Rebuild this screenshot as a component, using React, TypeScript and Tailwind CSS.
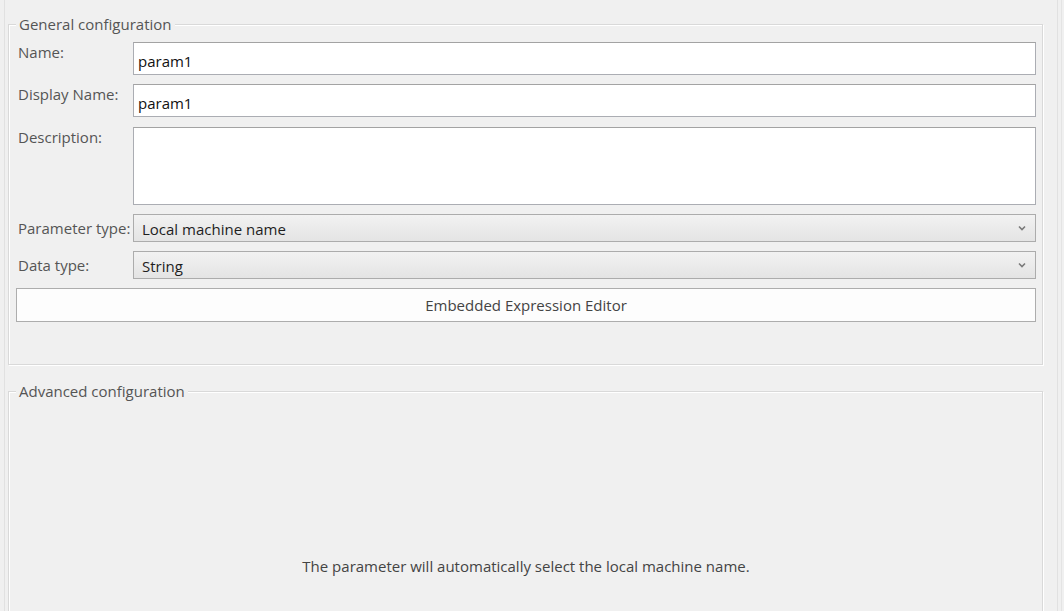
import React from 'react';

const font = { fontFamily: '"Segoe UI", "Open Sans", "Noto Sans", sans-serif' };

const Chevron: React.FC = () => (
  <svg width="8" height="6" viewBox="0 0 8 6" className="shrink-0">
    <path d="M1 1.5 L4 4.5 L7 1.5" fill="none" stroke="#7a7a7a" strokeWidth="1.6" />
  </svg>
);

const Label: React.FC<{ children: React.ReactNode }> = ({ children }) => (
  <div className="text-[#555] leading-[20px] pl-[2px]">{children}</div>
);

const TextBox: React.FC<{ value?: string; tall?: boolean }> = ({ value, tall }) => (
  <div
    className={`bg-white border border-[#abadb3] border-t-[#a3a3a3] px-[4px] text-[#111] leading-[20px] ${
      tall ? 'h-[78px] pt-[4px]' : 'h-[33px] pt-[8px]'
    }`}
  >
    {value}
  </div>
);

const Combo: React.FC<{ value: string }> = ({ value }) => (
  <div className="h-[28px] flex items-center justify-between border border-[#acacac] bg-gradient-to-b from-[#f2f2f2] to-[#e4e4e4] pl-[8px] pr-[9px] text-[#1e1e1e] leading-[20px]">
    <span className="pt-[1px]">{value}</span>
    <Chevron />
  </div>
);

const Group: React.FC<{ title: string; className?: string; children: React.ReactNode }> = ({
  title,
  className,
  children,
}) => (
  <fieldset
    className={`border border-[#d9d9d9] shadow-[inset_1px_1px_0_#ffffff,1px_1px_0_#ffffff] pl-[7px] pr-[6px] ${className ?? ''}`}
  >
    <legend className="px-[3px] bg-[#f0f0f0] text-[#555] leading-[20px]">{title}</legend>
    {children}
  </fieldset>
);

const App: React.FC = () => {
  return (
    <div className="w-[1064px] h-[611px] overflow-hidden bg-[#f0f0f0] flex text-[15px]" style={font}>
      <div className="w-[4px] shrink-0" />
      <div className="w-[1054px] shrink-0 border-l border-r border-[#e1e1e1] pl-[3px] pr-[14px] pt-[14px]">
        {/* General configuration */}
        <Group title="General configuration" className="pt-[8px] pb-[42px]">
          <div className="flex flex-col gap-[9px]">
            <div className="grid grid-cols-[117px_1fr]">
              <Label>Name:</Label>
              <TextBox value="param1" />
            </div>
            <div className="grid grid-cols-[117px_1fr]">
              <Label>Display Name:</Label>
              <TextBox value="param1" />
            </div>
            <div className="grid grid-cols-[117px_1fr] mt-[1px]">
              <Label>Description:</Label>
              <TextBox tall />
            </div>
            <div className="grid grid-cols-[117px_1fr] items-center">
              <Label>Parameter type:</Label>
              <Combo value="Local machine name" />
            </div>
            <div className="grid grid-cols-[117px_1fr] items-center">
              <Label>Data type:</Label>
              <Combo value="String" />
            </div>
            <button className="h-[34px] w-full bg-[#fdfdfd] border border-[#adadad] text-[#444] leading-[20px] text-center">
              Embedded Expression Editor
            </button>
          </div>
        </Group>

        {/* Advanced configuration */}
        <Group title="Advanced configuration" className="mt-[16px] pt-[155px] pb-[80px]">
          <p className="text-center text-[#444] leading-[20px]">
            The parameter will automatically select the local machine name.
          </p>
        </Group>
      </div>
      <div className="w-[3px] shrink-0" />
      <div className="w-px shrink-0 bg-[#e4e4e4]" />
    </div>
  );
};

export default App;
